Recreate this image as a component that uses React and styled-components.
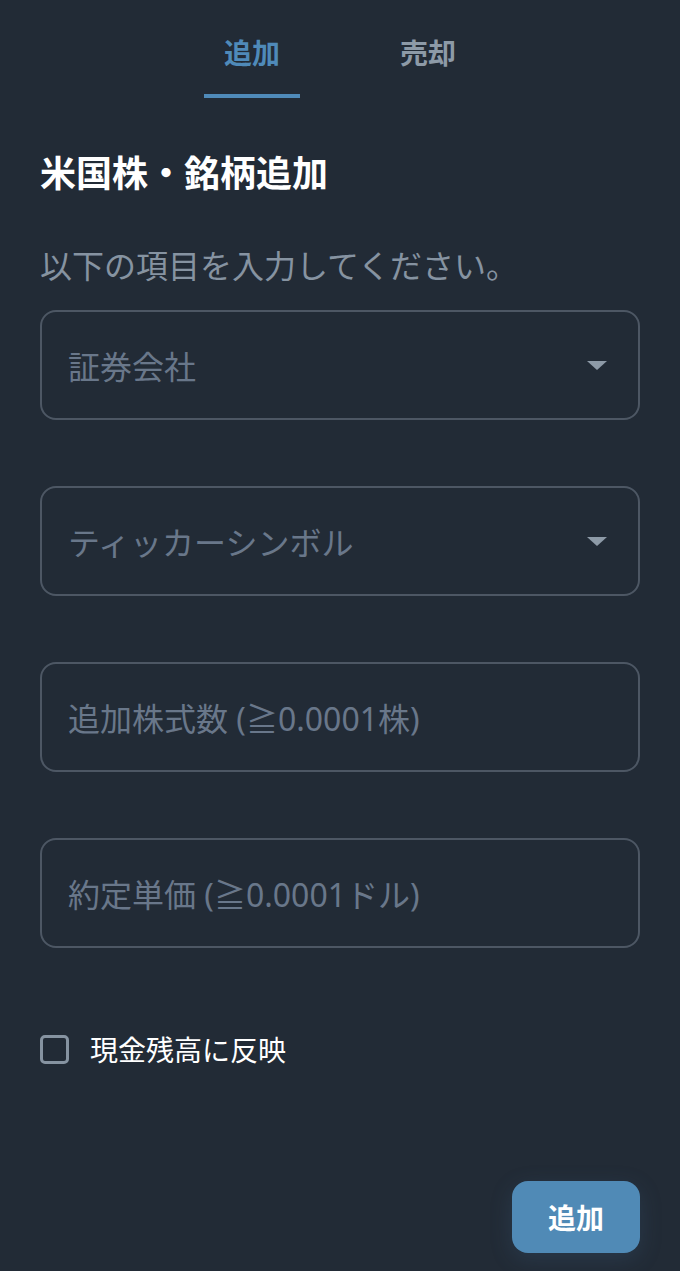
import React, { useState } from "react";
import styled, { createGlobalStyle } from "styled-components";

const Global = createGlobalStyle`
  html, body { margin: 0; padding: 0; background: #222b36; }
  body { font-family: "Noto Sans", "Noto Sans CJK JP", sans-serif; }
  * { box-sizing: border-box; }
`;

const Page = styled.div`
  min-height: 1271px;
  background: #222b36;
  padding: 0 40px;
  display: flex;
  flex-direction: column;
`;

const Tabs = styled.div`
  display: flex;
  justify-content: center;
  gap: 80px;
  flex-shrink: 0;
`;

const Tab = styled.div`
  width: 96px;
  height: 98px;
  padding-top: 10px;
  display: flex;
  align-items: center;
  justify-content: center;
  font-size: 28px;
  font-weight: 700;
  color: ${(p) => (p.$active ? "#4f8ab9" : "#8d9aa7")};
  border-bottom: 4px solid ${(p) => (p.$active ? "#4f8ab9" : "transparent")};
  font-family: "Noto Sans CJK JP", sans-serif;
`;

const Title = styled.h1`
  margin: 52px 0 0;
  font-size: 36px;
  line-height: 43px;
  font-weight: 700;
  color: #ffffff;
  font-family: "Noto Sans CJK JP", sans-serif;
`;

const Subtitle = styled.p`
  margin: 51px 0 0;
  font-size: 32px;
  line-height: 40px;
  color: #8693a1;
  font-family: "Noto Sans CJK JP", sans-serif;
`;

const Fields = styled.div`
  margin-top: 26px;
  display: flex;
  flex-direction: column;
  gap: 66px;
  flex-shrink: 0;
`;

const Field = styled.div`
  height: 110px;
  flex-shrink: 0;
  border: 2px solid #4d5764;
  border-radius: 16px;
  display: flex;
  align-items: center;
  justify-content: space-between;
  padding: 0 30px 0 26px;
`;

const Placeholder = styled.span`
  font-size: 32px;
  color: #69778a;
`;

const Caret = styled.svg`
  width: 22px;
  height: 11px;
  display: block;
`;

const CheckRow = styled.label`
  margin-top: 81px;
  height: 40px;
  display: flex;
  align-items: center;
  gap: 21px;
  cursor: pointer;
  flex-shrink: 0;
`;

const Box = styled.span`
  width: 29px;
  height: 29px;
  border: 3px solid #8693a1;
  border-radius: 5px;
  flex-shrink: 0;
`;

const CheckLabel = styled.span`
  font-size: 28px;
  color: #ffffff;
  font-family: "Noto Sans CJK JP", sans-serif;
`;

const Footer = styled.div`
  margin-top: 112px;
  display: flex;
  justify-content: flex-end;
  flex-shrink: 0;
`;

const Button = styled.button`
  width: 128px;
  height: 72px;
  border: none;
  border-radius: 16px;
  background: #508ab6;
  color: #ffffff;
  font-size: 28px;
  font-weight: 700;
  font-family: "Noto Sans CJK JP", sans-serif;
  box-shadow: 0 6px 22px rgba(70, 110, 150, 0.22);
  cursor: pointer;
`;

const fields = [
  { label: "証券会社", select: true },
  { label: "ティッカーシンボル", select: true },
  { label: "追加株式数 (≧0.0001株)" },
  { label: "約定単価 (≧0.0001ドル)" },
];

export default function App() {
  const [tab] = useState(0);
  return (
    <>
      <Global />
      <Page>
        <Tabs>
          <Tab $active={tab === 0}>追加</Tab>
          <Tab $active={tab === 1}>売却</Tab>
        </Tabs>
        <Title>米国株・銘柄追加</Title>
        <Subtitle>以下の項目を入力してください。</Subtitle>
        <Fields>
          {fields.map((f) => (
            <Field key={f.label}>
              <Placeholder>{f.label}</Placeholder>
              {f.select && (
                <Caret viewBox="0 0 22 11">
                  <path d="M1 1 L21 1 L11 10 Z" fill="#8d9aa7" />
                </Caret>
              )}
            </Field>
          ))}
        </Fields>
        <CheckRow>
          <Box />
          <CheckLabel>現金残高に反映</CheckLabel>
        </CheckRow>
        <Footer>
          <Button>追加</Button>
        </Footer>
      </Page>
    </>
  );
}
